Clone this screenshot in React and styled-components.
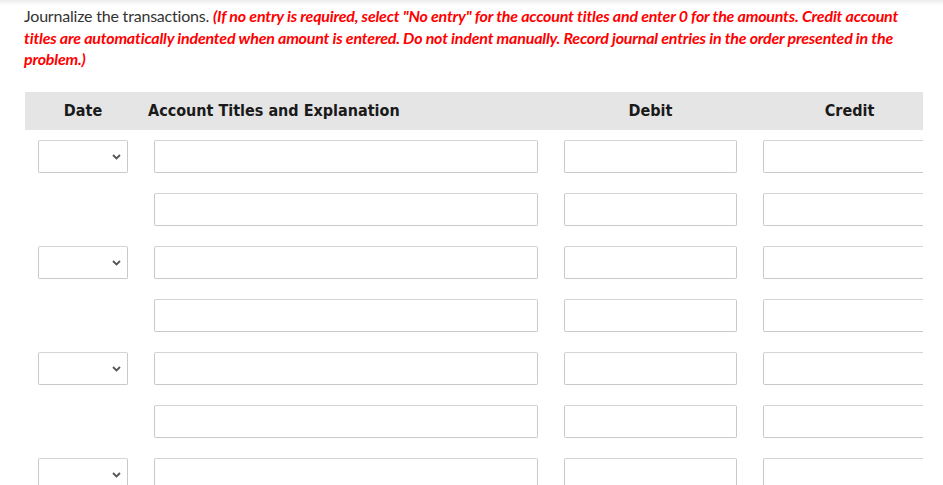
import React from 'react';
import styled, {createGlobalStyle} from 'styled-components';

const GlobalStyle = createGlobalStyle`
  html, body {
    margin: 0;
    padding: 0;
    background: #ffffff;
  }
  body {
    font-family: Lato, 'Open Sans', sans-serif;
    overflow: hidden;
  }
`;

const Page = styled.div`
  position: relative;
  width: 943px;
  padding-top: 5px;
  background: linear-gradient(#ececec 0px, #ffffff 5px);
`;

const Instructions = styled.p`
  margin: 0 0 0 24px;
  width: 884px;
  font-size: 16px;
  line-height: 21.5px;
  color: #333333;
  letter-spacing: -0.2px;
`;

const Note = styled.em`
  color: #ff0000;
  font-weight: 700;
  font-style: italic;
`;

const TableWrap = styled.div`
  margin: 22px 0 0 25px;
  width: 898px;
  overflow: hidden;
`;

const Grid = styled.div`
  display: grid;
  grid-template-columns: 116px 410px 199px 199px;
  width: 924px;
`;

const HeadCell = styled.div`
  height: 38px;
  display: flex;
  align-items: center;
  justify-content: ${p => (p.$left ? 'flex-start' : 'center')};
  padding-left: ${p => (p.$left ? '7px' : '0')};
  background: #e5e5e5;
  font-family: 'DejaVu Sans Condensed', 'DejaVu Sans', sans-serif;
  font-weight: 700;
  font-size: 16px;
  color: #1a1a1a;
`;

const Cell = styled.div`
  padding: 10px 13px;
  height: 53px;
  box-sizing: border-box;
`;

const TextBox = styled.input`
  display: block;
  box-sizing: border-box;
  width: 100%;
  height: 33px;
  margin: 0;
  border: 1px solid #c9c9c9;
  border-top-color: #d4d4d4;
  border-radius: 2px;
  background: #ffffff;
  font-family: Lato, sans-serif;
  font-size: 14px;
  outline: none;
`;

const SelectWrap = styled.div`
  position: relative;
  width: 90px;
  height: 33px;
`;

const Select = styled.select`
  appearance: none;
  -webkit-appearance: none;
  box-sizing: border-box;
  width: 100%;
  height: 100%;
  margin: 0;
  border: 1px solid #c9c9c9;
  border-top-color: #d4d4d4;
  border-radius: 2px;
  background: #ffffff;
  font-family: Lato, sans-serif;
  outline: none;
`;

const Chevron = styled.svg`
  position: absolute;
  right: 7px;
  top: 14px;
  pointer-events: none;
`;

const rows = [true, false, true, false, true, false, true, false];

const DateSelect = () => (
  <SelectWrap>
    <Select defaultValue="">
      <option value=""></option>
    </Select>
    <Chevron width="9" height="6" viewBox="0 0 9 6">
      <path d="M1 1l3.5 3.5L8 1" fill="none" stroke="#555" strokeWidth="1.8" />
    </Chevron>
  </SelectWrap>
);

const App = () => {
  return (
    <Page>
      <GlobalStyle />
      <Instructions>
        Journalize the transactions.{' '}
        <Note>
          (If no entry is required, select "No entry" for the account titles and enter 0 for the
          amounts. Credit account titles are automatically indented when amount is entered. Do not
          indent manually. Record journal entries in the order presented in the problem.)
        </Note>
      </Instructions>

      <TableWrap>
        <Grid>
          <HeadCell>Date</HeadCell>
          <HeadCell $left>Account Titles and Explanation</HeadCell>
          <HeadCell>Debit</HeadCell>
          <HeadCell>Credit</HeadCell>

          {rows.map((hasDate, i) => (
            <React.Fragment key={i}>
              <Cell>{hasDate && <DateSelect />}</Cell>
              <Cell>
                <TextBox type="text" />
              </Cell>
              <Cell>
                <TextBox type="text" />
              </Cell>
              <Cell>
                <TextBox type="text" />
              </Cell>
            </React.Fragment>
          ))}
        </Grid>
      </TableWrap>
    </Page>
  );
};

export default App;
